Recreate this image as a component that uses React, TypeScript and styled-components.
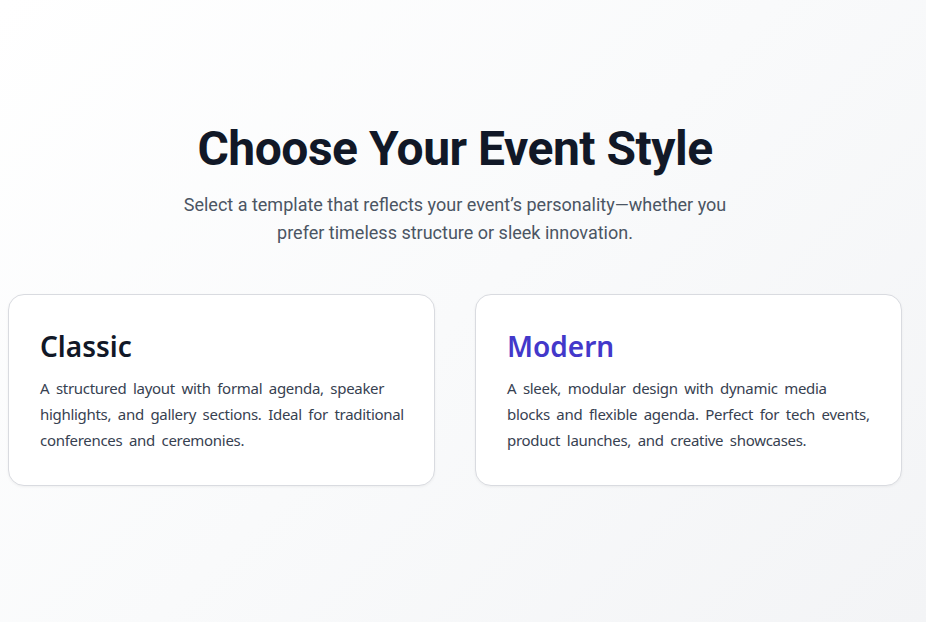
import React from "react";
import styled, { createGlobalStyle } from "styled-components";

const GlobalStyle = createGlobalStyle`
  html, body {
    margin: 0;
    padding: 0;
  }
  body {
    font-family: Roboto, "Noto Sans", sans-serif;
    background: linear-gradient(135deg, #ffffff 0%, #f9fafb 50%, #f3f4f6 100%);
    min-height: 100vh;
  }
`;

type Template = {
  name: string;
  description: string;
  accent?: boolean;
};

const templates: Template[] = [
  {
    name: "Classic",
    description:
      "A structured layout with formal agenda, speaker highlights, and gallery sections. Ideal for traditional conferences and ceremonies.",
  },
  {
    name: "Modern",
    description:
      "A sleek, modular design with dynamic media blocks and flexible agenda. Perfect for tech events, product launches, and creative showcases.",
    accent: true,
  },
];

const App = () => {
  return (
    <>
      <GlobalStyle />
      <Page>
        <Section>
          <Heading>Choose Your Event Style</Heading>
          <Subtitle>
            Select a template that reflects your event’s personality—whether
            you prefer timeless structure or sleek innovation.
          </Subtitle>
          <CardGrid>
            {templates.map((t) => (
              <Card key={t.name}>
                <CardTitle $accent={t.accent}>{t.name}</CardTitle>
                <CardText>{t.description}</CardText>
              </Card>
            ))}
          </CardGrid>
        </Section>
      </Page>
    </>
  );
};

const Page = styled.main`
  min-height: 100vh;
  padding: 119px 24px 0 8px;
  box-sizing: border-box;
`;

const Section = styled.section`
  display: flex;
  flex-direction: column;
  align-items: center;
`;

const Heading = styled.h1`
  margin: 0;
  font-size: 48px;
  line-height: 60px;
  font-weight: 700;
  color: #111827;
  letter-spacing: -0.5px;
`;

const Subtitle = styled.p`
  margin: 12px 0 0;
  max-width: 560px;
  text-align: center;
  font-size: 18px;
  line-height: 28px;
  color: #4b5563;
`;

const CardGrid = styled.div`
  width: 100%;
  margin-top: 47px;
  display: grid;
  grid-template-columns: 1fr 1fr;
  gap: 40px;
`;

const Card = styled.div`
  background: #ffffff;
  border: 1px solid #d9dbe0;
  border-radius: 16px;
  padding: 32px 28px 32px 31px;
  box-shadow: 0 1px 3px rgba(0, 0, 0, 0.05);
`;

const CardTitle = styled.h2<{ $accent?: boolean }>`
  margin: 0;
  font-family: "Noto Sans", Roboto, sans-serif;
  font-size: 28px;
  line-height: 38px;
  font-weight: 600;
  color: ${(p) => (p.$accent ? "#4338ca" : "#111827")};
`;

const CardText = styled.p`
  margin: 10px 0 0;
  font-family: "Noto Sans", Roboto, sans-serif;
  font-size: 15px;
  line-height: 26px;
  letter-spacing: -0.3px;
  word-spacing: 3px;
  color: #374151;
`;

export default App;
